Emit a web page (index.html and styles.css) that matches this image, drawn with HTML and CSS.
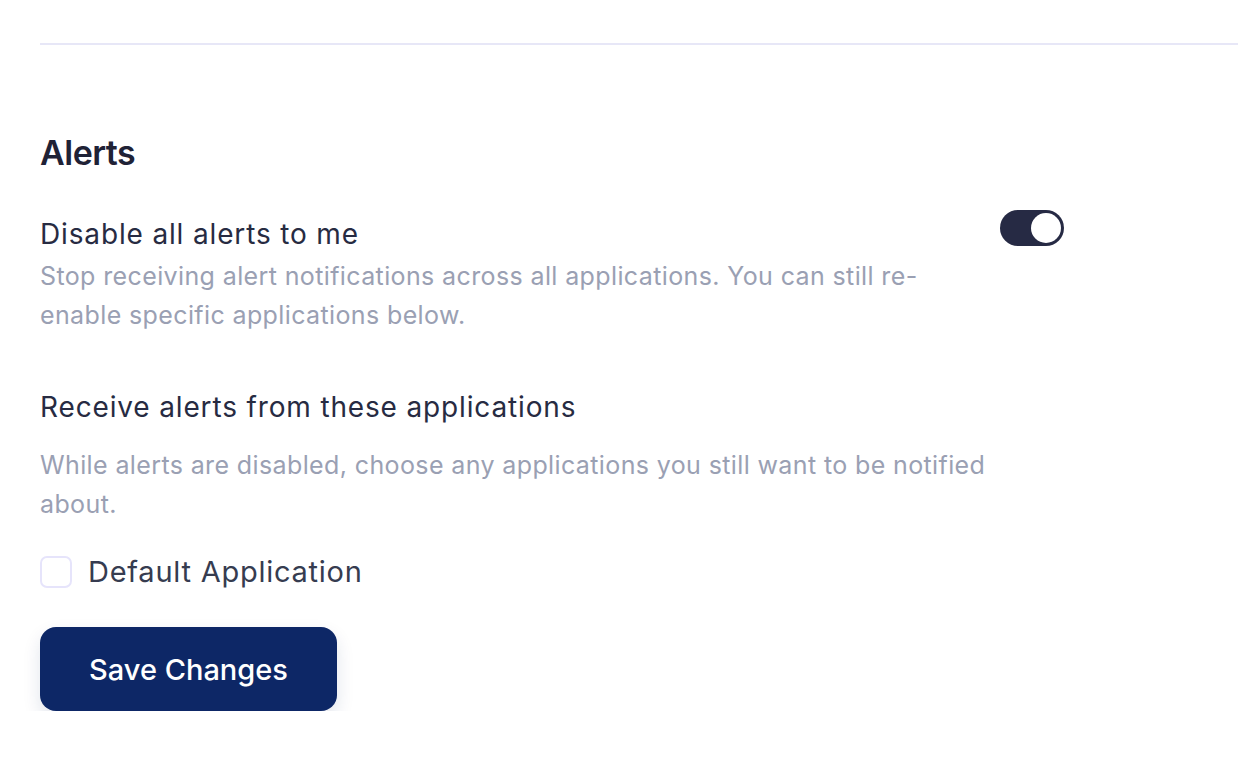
FILE: index.html
```html
<!DOCTYPE html>
<html lang="en">
<head>
<meta charset="utf-8">
<title>Alerts</title>
<link rel="stylesheet" href="styles.css">
</head>
<body>
<div class="page">
  <hr class="divider">
  <section class="alerts">
    <h2 class="title">Alerts</h2>
    <div class="setting-row">
      <div class="setting-text">
        <h3 class="setting-name">Disable all alerts to me</h3>
        <p class="setting-desc">Stop receiving alert notifications across all applications. You can still re-enable specific applications below.</p>
      </div>
      <button class="toggle" type="button" aria-pressed="true"><span class="knob"></span></button>
    </div>
    <div class="apps">
      <h3 class="setting-name">Receive alerts from these applications</h3>
      <p class="setting-desc apps-desc">While alerts are disabled, choose any applications you still want to be notified about.</p>
      <label class="check-row"><span class="checkbox"></span><span class="check-label">Default Application</span></label>
    </div>
    <button class="save" type="button">Save Changes</button>
  </section>
</div>
</body>
</html>
```
FILE: styles.css
```css
html, body {
  margin: 0;
  padding: 0;
  background: #ffffff;
}
body {
  font-family: "Inter", "Noto Sans", sans-serif;
}
.page {
  padding: 43px 0 0 40px;
}
.divider {
  margin: 0;
  border: 0;
  height: 2px;
  background: #e7e7f7;
}
.alerts {
  width: 1024px;
  padding-top: 86px;
}
.title {
  margin: 0;
  font-size: 34px;
  line-height: 44px;
  font-weight: 600;
  letter-spacing: -0.5px;
  color: #1f2236;
}
.setting-row {
  display: flex;
  align-items: flex-start;
  gap: 40px;
  margin-top: 41px;
}
.setting-text {
  flex: 1;
}
.setting-name {
  margin: 0;
  font-size: 28px;
  line-height: 36px;
  font-weight: 400;
  letter-spacing: 0.85px;
  color: #272b42;
}
.setting-desc {
  margin: 5px 0 0;
  font-size: 25px;
  line-height: 39px;
  letter-spacing: 0.38px;
  color: #9aa0b3;
}
.toggle {
  flex: none;
  position: relative;
  width: 64px;
  height: 36px;
  margin-top: -6px;
  padding: 0;
  border: 0;
  border-radius: 18px;
  background: #262a44;
}
.knob {
  position: absolute;
  top: 3px;
  right: 3px;
  width: 30px;
  height: 30px;
  border-radius: 50%;
  background: #ffffff;
}
.apps {
  margin-top: 54px;
  width: 990px;
}
.apps-desc {
  margin-top: 21px;
}
.check-row {
  display: flex;
  align-items: center;
  gap: 16px;
  margin-top: 32px;
}
.checkbox {
  width: 32px;
  height: 32px;
  box-sizing: border-box;
  border: 2px solid #e6e4fb;
  border-radius: 7px;
  background: #fff;
}
.check-label {
  font-size: 29px;
  line-height: 32px;
  letter-spacing: 0.75px;
  color: #363c50;
}
.save {
  display: block;
  margin-top: 39px;
  width: 297px;
  height: 84px;
  border: 0;
  border-radius: 16px;
  background: #0d2766;
  color: #ffffff;
  font-family: inherit;
  font-size: 29px;
  font-weight: 500;
  box-shadow: 0 8px 18px rgba(13, 39, 102, 0.12);
}
```
